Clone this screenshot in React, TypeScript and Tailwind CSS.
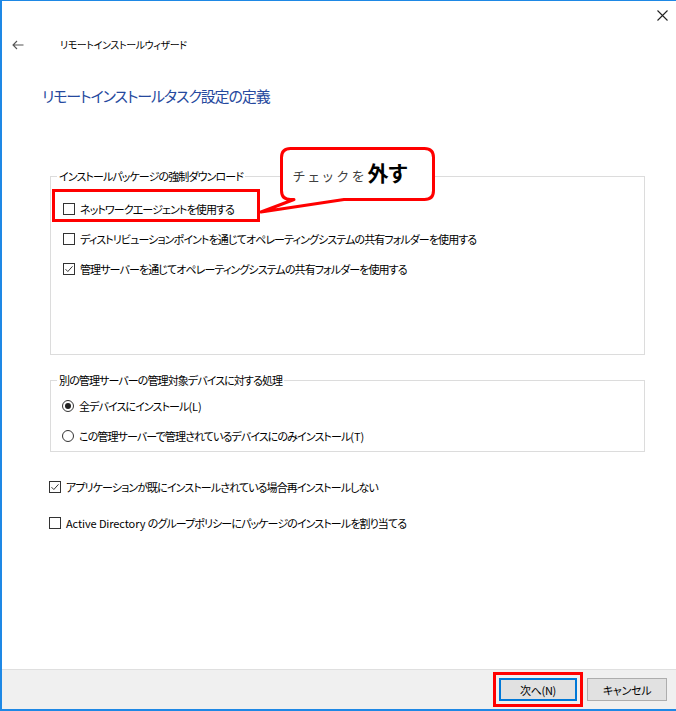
import React from 'react'

function CheckBox(props: { checked?: boolean }) {
  return (
    <span className="flex h-[12px] w-[12px] shrink-0 items-center justify-center border border-[#333] bg-white">
      {props.checked && (
        <svg viewBox="0 0 12 12" className="h-[10px] w-[10px]">
          <path d="M1.8 6.2 L4.6 9 L10.2 2.8" fill="none" stroke="#222" strokeWidth="1.1" />
        </svg>
      )}
    </span>
  )
}

function Radio(props: { checked?: boolean }) {
  return (
    <span className="flex h-[12px] w-[12px] shrink-0 items-center justify-center rounded-full border border-[#333] bg-white">
      {props.checked && <span className="h-[6px] w-[6px] rounded-full bg-[#222]" />}
    </span>
  )
}

function Row(props: { children: React.ReactNode; label: React.ReactNode; className?: string }) {
  return (
    <div className={`flex h-[30px] items-center gap-[5px] ${props.className ?? ''}`}>
      {props.children}
      <span className="whitespace-nowrap">{props.label}</span>
    </div>
  )
}

// 英字部分は詰めすぎない
const latin = 'tracking-[-0.1px]'

export default function App() {
  return (
    <div className="relative flex h-[711px] w-[676px] flex-col overflow-hidden border-t border-b-2 border-l-2 border-[#1e88e5] bg-white font-['Noto_Sans_CJK_JP','Noto_Sans',sans-serif] text-[11px] leading-[16px] tracking-[-0.9px] text-black [font-feature-settings:'palt']">
      {/* 閉じるボタン */}
      <div className="flex h-[29px] items-center justify-end pr-[8px]">
        <svg viewBox="0 0 11 11" className="h-[11px] w-[11px]">
          <path d="M0.5 0.5 L10.5 10.5 M10.5 0.5 L0.5 10.5" stroke="#222" strokeWidth="1.1" />
        </svg>
      </div>

      {/* 戻る + タイトル */}
      <div className="mt-[3px] flex h-[24px] items-center pl-[10px]">
        <svg viewBox="0 0 12 10" className="h-[10px] w-[12px]">
          <path d="M11.5 5 H1 M5 1 L1 5 L5 9" fill="none" stroke="#555" strokeWidth="1.1" />
        </svg>
        <span className="ml-[36px] text-[10px] tracking-[-0.4px]">リモートインストールウィザード</span>
      </div>

      <h1 className="mt-[29px] pl-[40px] text-[15px] leading-[20px] tracking-[-1.1px] text-[#26499e]">
        リモートインストールタスク設定の定義
      </h1>

      {/* インストールパッケージの強制ダウンロード */}
      <fieldset className="mt-[62px] ml-[48px] h-[187px] w-[595px] border border-[#dcdcdc]">
        <legend className="ml-[6px] px-[2px]">インストールパッケージの強制ダウンロード</legend>
        <div className="pt-[10px] pl-[12px]">
          <Row label="ネットワークエージェントを使用する">
            <CheckBox />
          </Row>
          <Row label="ディストリビューションポイントを通じてオペレーティングシステムの共有フォルダーを使用する">
            <CheckBox />
          </Row>
          <Row label="管理サーバーを通じてオペレーティングシステムの共有フォルダーを使用する">
            <CheckBox checked />
          </Row>
        </div>
      </fieldset>

      {/* 別の管理サーバー */}
      <fieldset className="mt-[17px] ml-[48px] h-[80px] w-[595px] border border-[#dcdcdc]">
        <legend className="ml-[6px] px-[2px]">別の管理サーバーの管理対象デバイスに対する処理</legend>
        <div className="pt-[3px] pl-[11px]">
          <Row
            label={
              <>
                全デバイスにインストール<span className={latin}>(L)</span>
              </>
            }
          >
            <Radio checked />
          </Row>
          <Row
            label={
              <>
                この管理サーバーで管理されているデバイスにのみインストール<span className={latin}>(T)</span>
              </>
            }
          >
            <Radio />
          </Row>
        </div>
      </fieldset>

      <Row className="mt-[20px] pl-[47px]" label="アプリケーションが既にインストールされている場合再インストールしない">
        <CheckBox checked />
      </Row>
      <Row
        className="mt-[6px] pl-[47px]"
        label={
          <>
            <span className={latin}>Active Directory </span>のグループポリシーにパッケージのインストールを割り当てる
          </>
        }
      >
        <CheckBox />
      </Row>

      {/* フッター */}
      <div className="mt-auto flex h-[40px] items-center justify-end border-t border-[#dfdfdf] bg-[#f0f0f0] pr-[9px] tracking-[-0.3px]">
        <div className="border-[3px] border-[#ff0000] p-[3px]">
          <button className="flex h-[23px] w-[78px] items-center justify-center border-2 border-[#0078d7] bg-[#e1e1e1]">
            次へ(N)
          </button>
        </div>
        <button className="ml-[4px] flex h-[23px] w-[80px] items-center justify-center border border-[#adadad] bg-[#e1e1e1]">
          キャンセル
        </button>
      </div>

      {/* 注記: 赤枠 */}
      <div className="absolute top-[188px] left-[50px] h-[33px] w-[208px] border-[3px] border-[#ff0000]" />

      {/* 注記: 吹き出し */}
      <div className="absolute top-[139px] left-[248px] h-[80px] w-[190px]">
        <svg viewBox="0 0 190 80" className="absolute inset-0 h-full w-full">
          <path
            d="M40.5 8.5 H174.5 Q183.5 8.5 183.5 17.5 V50.5 Q183.5 59.5 174.5 59.5 H94 L11 72 L44 59.5 H40.5 Q31.5 59.5 31.5 50.5 V17.5 Q31.5 8.5 40.5 8.5 Z"
            fill="white"
            stroke="#ff0000"
            strokeWidth="3"
            strokeLinejoin="round"
          />
        </svg>
        <div className="absolute top-[20px] left-[43px] flex items-baseline">
          <span className="text-[13px] tracking-[3.6px] text-[#404040]">チェックを</span>
          <span className="text-[21px] font-bold leading-[24px] tracking-[0px]">外す</span>
        </div>
      </div>
    </div>
  )
}
